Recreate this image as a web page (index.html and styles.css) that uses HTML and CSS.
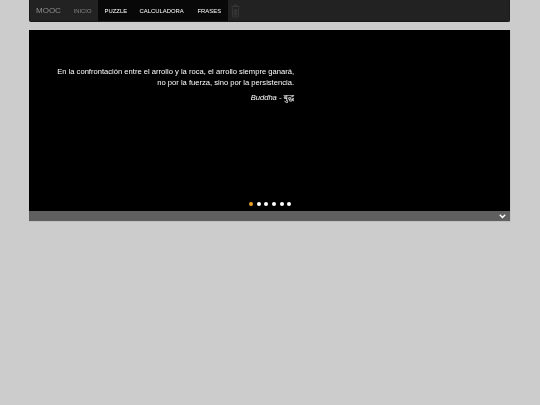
FILE: index.html
```html
<!DOCTYPE html>
<html lang="es">
<head>
<meta charset="utf-8">
<title>MOOC</title>
<link rel="stylesheet" href="styles.css">
</head>
<body>
<div class="container">
  <nav class="navbar">
    <a class="brand" href="#">MOOC</a>
    <ul class="nav">
      <li class="item active"><a href="#">INICIO</a></li>
      <li class="item dark"><a href="#">PUZZLE</a></li>
      <li class="item dark"><a href="#">CALCULADORA</a></li>
      <li class="item dark"><a href="#">FRASES</a></li>
    </ul>
    <span class="trash">
      <svg width="9" height="14" viewBox="0 0 9 14"><path d="M0.5 2.5h8M3 2.5v-1.5h3v1.5M1.2 3.5l0.6 9.5h5.4l0.6-9.5M3.2 5v6.5M4.5 5v6.5M5.8 5v6.5" fill="none" stroke="#3a3a3a" stroke-width="0.9"/></svg>
    </span>
  </nav>
  <section class="slider">
    <div class="slide">
      <blockquote class="quote">
        <p class="text">En la confrontación entre el arrollo y la roca, el arrollo siempre ganará,<br>no por la fuerza, sino por la persistencia.</p>
        <p class="author">Buddha - बुद्ध</p>
      </blockquote>
      <div class="dots">
        <span class="dot on"></span><span class="dot"></span><span class="dot"></span><span class="dot"></span><span class="dot"></span><span class="dot"></span>
      </div>
    </div>
    <div class="bar">
      <svg class="chev" width="7" height="5" viewBox="0 0 7 5"><path d="M0.8 0.8l2.7 2.7 2.7-2.7" fill="none" stroke="#fff" stroke-width="1.5"/></svg>
    </div>
  </section>
</div>
</body>
</html>
```
FILE: styles.css
```css
* { box-sizing: border-box; }
html, body { margin: 0; padding: 0; }
body {
  background: #cccccc;
  font-family: "Liberation Sans", Arial, "Noto Sans", sans-serif;
  width: 540px;
  height: 405px;
}
.container {
  width: 481px;
  margin: 0 0 0 29px;
}
.navbar {
  height: 22px;
  background: #222222;
  border: 1px solid #1a1a1a;
  border-top: 0;
  border-radius: 0 0 2px 2px;
  display: flex;
  align-items: stretch;
  padding-left: 6px;
}
.brand {
  color: #8f8f8f;
  font-size: 8px;
  text-decoration: none;
  display: flex;
  align-items: center;
  padding-right: 6px;
  will-change: transform;
}
.nav {
  list-style: none;
  margin: 0;
  padding: 0;
  display: flex;
}
.item a {
  display: flex;
  align-items: center;
  height: 100%;
  font-size: 5.9px;
  text-decoration: none;
  padding: 0 6.5px;
}
.item a span, .item a { will-change: transform; }
.item.active a { color: #858585; }
.item.dark { background: #080808; }
.item.dark a { color: #ffffff; }
.item.dark:last-child a { padding-right: 7.5px; }
.trash {
  display: flex;
  align-items: center;
  padding-left: 3px;
}
.slider {
  margin-top: 8px;
  margin-right: -1px;
  border-right: 1px solid #c2c2c2;
  border-bottom: 1px solid #bfbfbf;
}
.slide {
  height: 181px;
  background: #000;
  position: relative;
  padding-top: 36px;
}
.quote {
  margin: 0;
  width: 265px;
  text-align: right;
  color: #ffffff;
  will-change: transform;
}
.text {
  margin: 0;
  font-size: 7.6px;
  line-height: 11px;
}
.author {
  margin: 4px 0 0;
  font-size: 7.6px;
  font-style: italic;
  line-height: 11px;
}
.dots {
  position: absolute;
  left: 220px;
  top: 172px;
  display: flex;
  gap: 3.7px;
}
.dot {
  width: 4px;
  height: 4px;
  border-radius: 50%;
  background: #ffffff;
}
.dot.on { background: #eda12a; }
.bar {
  height: 10px;
  background: #5f5f5f;
  display: flex;
  justify-content: flex-end;
  align-items: center;
  padding-right: 4px;
}
.chev { display: block; margin-top: 1px; }
```
